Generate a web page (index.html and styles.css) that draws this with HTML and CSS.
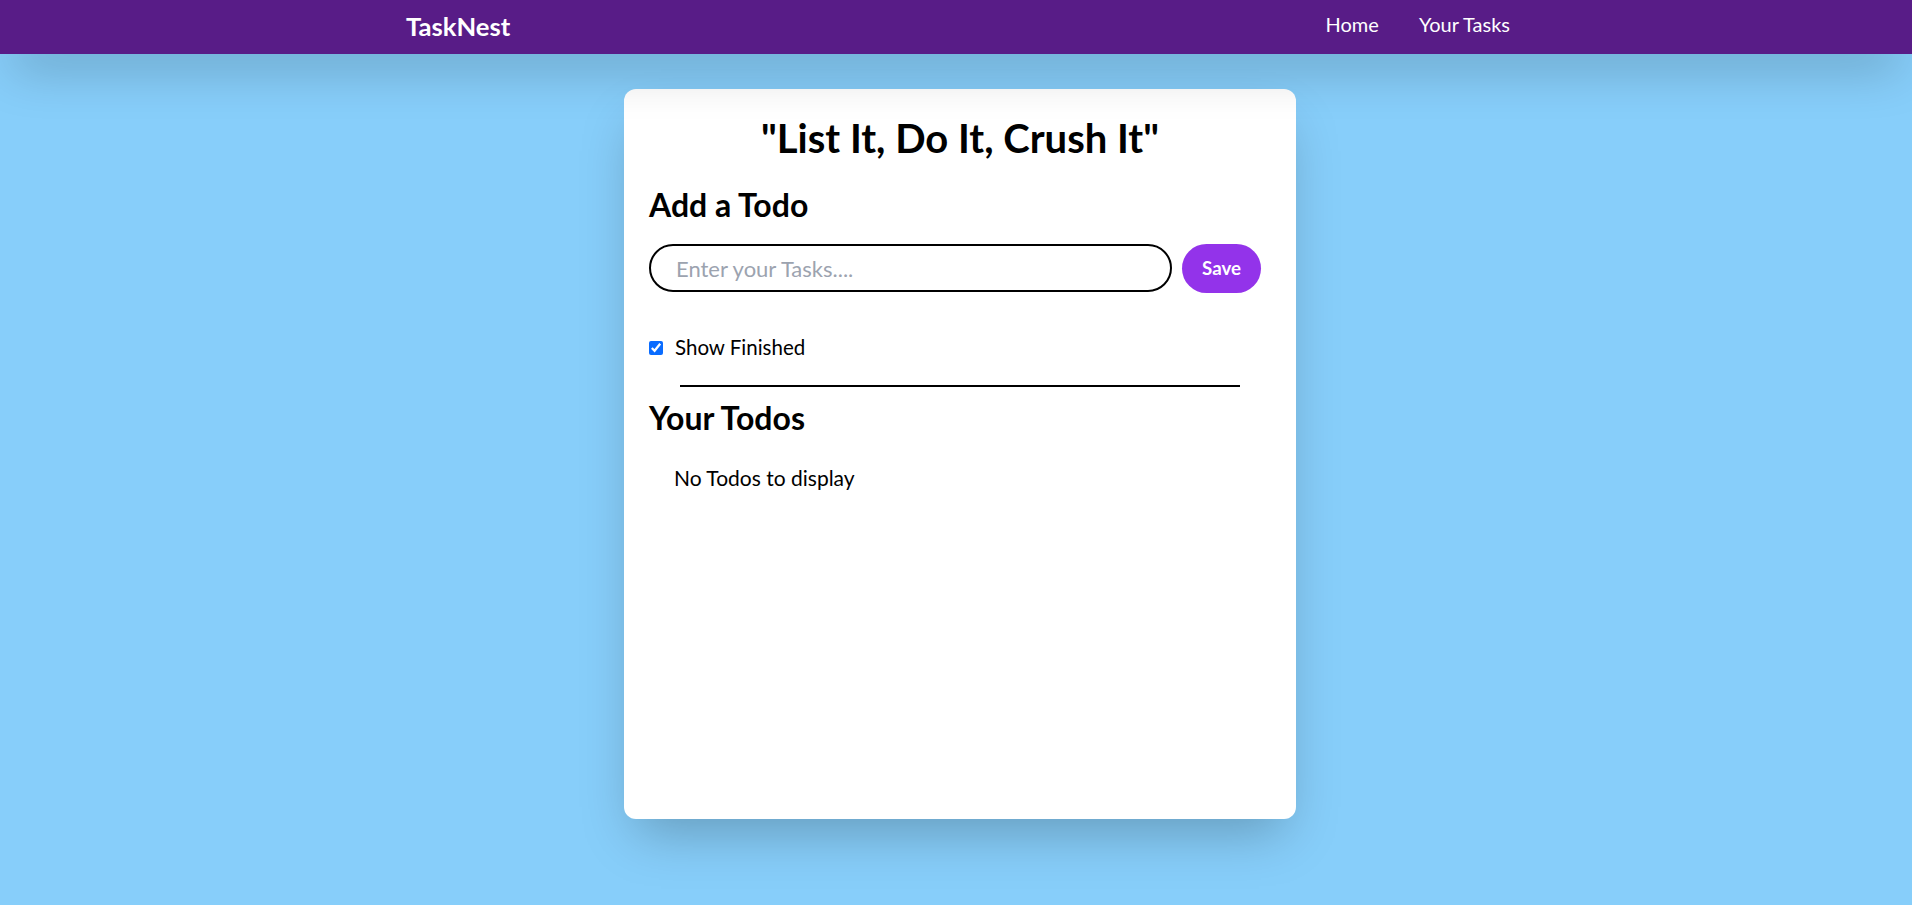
FILE: index.html
```html
<!DOCTYPE html>
<html lang="en">
<head>
<meta charset="utf-8">
<title>TaskNest</title>
<link rel="stylesheet" href="styles.css">
</head>
<body>
<nav class="navbar">
  <div class="nav-inner">
    <div class="brand">TaskNest</div>
    <ul class="nav-links">
      <li>Home</li>
      <li>Your Tasks</li>
    </ul>
  </div>
</nav>
<main class="main">
  <section class="card">
    <h1 class="title">"List It, Do It, Crush It"</h1>
    <h2 class="heading add-heading">Add a Todo</h2>
    <div class="add-row">
      <input class="task-input" type="text" placeholder="Enter your Tasks....">
      <button class="save-btn">Save</button>
    </div>
    <label class="finished-row">
      <input class="finished-check" type="checkbox" checked>
      <span>Show Finished</span>
    </label>
    <div class="divider"></div>
    <h2 class="heading todos-heading">Your Todos</h2>
    <div class="todos">
      <div class="empty">No Todos to display</div>
    </div>
  </section>
</main>
</body>
</html>
```

FILE: styles.css
```css
* { box-sizing: border-box; }
html, body {
  margin: 0;
  padding: 0;
}
body {
  background: #87cefa;
  font-family: Lato, "Noto Sans", sans-serif;
  color: #000;
  min-height: 100vh;
}
.navbar {
  height: 54px;
  background: #581c87;
  color: #fff;
  box-shadow: 0 25px 50px -12px rgba(0, 0, 0, 0.25);
  position: relative;
  z-index: 1;
}
.nav-inner {
  width: 1104px;
  margin-left: calc(50% - 550px);
  display: flex;
  justify-content: space-between;
  align-items: flex-start;
  padding-top: 11px;
}
.brand {
  font-size: 25.6px;
  line-height: 1.2;
  font-weight: 700;
}
.nav-links {
  list-style: none;
  margin: 1px 0 0 0;
  padding: 0;
  display: flex;
  gap: 40px;
  font-size: 20px;
  line-height: 1.2;
}
.main {
  padding-top: 35px;
  padding-bottom: 40px;
}
.card {
  width: 672px;
  height: 730px;
  margin-left: calc(50% - 332px);
  background: #fff;
  border-radius: 12px;
  padding: 24.5px 25px;
  box-shadow: 0 25px 50px -12px rgba(0, 0, 0, 0.25);
}
.title {
  margin: 0;
  text-align: center;
  font-size: 40px;
  line-height: 1.2;
  font-weight: 700;
}
.heading {
  margin: 0;
  font-size: 32px;
  line-height: 1.2;
  font-weight: 700;
}
.add-heading { margin-top: 24px; }
.add-row {
  margin-top: 20px;
  display: flex;
  align-items: center;
}
.task-input {
  flex: 1;
  min-width: 0;
  height: 48px;
  border: 2px solid #000;
  border-radius: 9999px;
  padding: 0 25px;
  font-family: inherit;
  font-size: 22px;
  color: #000;
  outline: none;
}
.task-input::placeholder { color: #9ca3af; }
.save-btn {
  margin: 0 10px;
  height: 49px;
  padding: 0 20px;
  border: none;
  border-radius: 9999px;
  background: #9333ea;
  color: #fff;
  font-family: inherit;
  font-weight: 700;
  font-size: 18.7px;
}
.finished-row {
  margin-top: 42px;
  display: flex;
  align-items: flex-start;
  gap: 12px;
  font-size: 20.5px;
  line-height: 1.2;
}
.finished-check {
  margin: 6px 0 0 0;
  width: 14px;
  height: 14px;
  accent-color: #0a6cff;
}
.divider {
  margin: 25.5px auto 0;
  width: 90%;
  height: 2px;
  background: #000;
}
.todos-heading { margin-top: 12.4px; }
.todos {
  margin-top: 27.5px;
  padding-left: 25px;
}
.empty {
  font-size: 21px;
  line-height: 1.2;
}
```
